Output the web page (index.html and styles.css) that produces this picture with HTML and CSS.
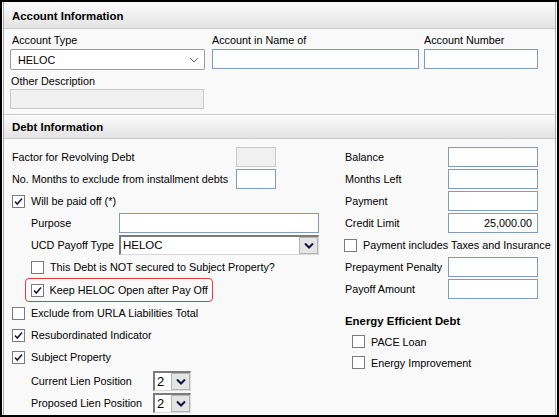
FILE: index.html
```html
<html>
  <head>
    <link rel="stylesheet" href="styles.css">
  </head>
  <body>
    <div class="frame">
      <div class="panel">
        <div class="bar">Account Information</div>
        <div class="account">
          <label class="cap first">Account Type</label>
          <label class="cap">Account in Name of</label>
          <label class="cap">Account Number</label>

          <div class="select w-type">
            <span>HELOC</span>
            <svg class="chev" viewBox="0 0 10 6"><polyline points="1,1 5,5 9,1"/></svg>
          </div>
          <div class="text w-name"></div>
          <div class="text w-number"></div>

          <label class="cap wide">Other Description</label>
          <div class="text off w-other wide"></div>
        </div>

        <div class="bar boxed">Debt Information</div>
        <div class="debt">
          <div class="col">
            <div class="row">
              <span class="lbl w-long">Factor for Revolving Debt</span>
              <div class="text off small"></div>
            </div>
            <div class="row">
              <span class="lbl w-long">No. Months to exclude from installment debts</span>
              <div class="text small"></div>
            </div>
            <div class="row">
              <span class="cb on"><svg viewBox="0 0 11 11"><polyline points="2,5.5 4.3,8 9,2.5"/></svg></span>
              <span>Will be paid off (*)</span>
            </div>
            <div class="row indent">
              <span class="lbl w-mid">Purpose</span>
              <div class="text w-purpose"></div>
            </div>
            <div class="row indent">
              <span class="lbl w-mid">UCD Payoff Type</span>
              <div class="oldsel w-purpose">
                <span class="val">HELOC</span>
                <span class="btn"><svg viewBox="0 0 10 7"><polyline points="1,1.5 5,5.5 9,1.5"/></svg></span>
              </div>
            </div>
            <div class="row indent">
              <span class="cb"></span>
              <span>This Debt is NOT secured to Subject Property?</span>
            </div>
            <div class="row marked">
              <span class="cb on"><svg viewBox="0 0 11 11"><polyline points="2,5.5 4.3,8 9,2.5"/></svg></span>
              <span>Keep HELOC Open after Pay Off</span>
            </div>
            <div class="row">
              <span class="cb"></span>
              <span>Exclude from URLA Liabilities Total</span>
            </div>
            <div class="row">
              <span class="cb on"><svg viewBox="0 0 11 11"><polyline points="2,5.5 4.3,8 9,2.5"/></svg></span>
              <span>Resubordinated Indicator</span>
            </div>
            <div class="row">
              <span class="cb on"><svg viewBox="0 0 11 11"><polyline points="2,5.5 4.3,8 9,2.5"/></svg></span>
              <span>Subject Property</span>
            </div>
            <div class="row indent lien">
              <span class="lbl w-lien">Current Lien Position</span>
              <div class="oldsel tiny">
                <span class="val">2</span>
                <span class="btn"><svg viewBox="0 0 10 7"><polyline points="1,1.5 5,5.5 9,1.5"/></svg></span>
              </div>
            </div>
            <div class="row indent">
              <span class="lbl w-lien">Proposed Lien Position</span>
              <div class="oldsel tiny">
                <span class="val">2</span>
                <span class="btn"><svg viewBox="0 0 10 7"><polyline points="1,1.5 5,5.5 9,1.5"/></svg></span>
              </div>
            </div>
          </div>

          <div class="col">
            <div class="row">
              <span class="lbl w-right">Balance</span>
              <div class="text w-amount"></div>
            </div>
            <div class="row">
              <span class="lbl w-right">Months Left</span>
              <div class="text w-amount"></div>
            </div>
            <div class="row">
              <span class="lbl w-right">Payment</span>
              <div class="text w-amount"></div>
            </div>
            <div class="row">
              <span class="lbl w-right">Credit Limit</span>
              <div class="text w-amount num">25,000.00</div>
            </div>
            <div class="row">
              <span class="cb"></span>
              <span>Payment includes Taxes and Insurance</span>
            </div>
            <div class="row">
              <span class="lbl w-right">Prepayment Penalty</span>
              <div class="text w-amount"></div>
            </div>
            <div class="row">
              <span class="lbl w-right">Payoff Amount</span>
              <div class="text w-amount"></div>
            </div>

            <h3>Energy Efficient Debt</h3>
            <div class="row short">
              <span class="cb"></span>
              <span>PACE Loan</span>
            </div>
            <div class="row short">
              <span class="cb"></span>
              <span>Energy Improvement</span>
            </div>
          </div>
        </div>
      </div>
    </div>
  </body>
</html>
```

FILE: styles.css
```css
:root {
  --frame-color: #000;
  --panel-color: #f9f9f9;
  --line-color: #c9c9c9;
  --side-color: #a9a9a9;
  --text-color: #000;
  --input-border: #7f9db9;
  --off-border: #c8c8c8;
  --off-fill: #f0f0f0;
  --mark-color: #e23c3c;
}

* {
  box-sizing: border-box;
}

html, body {
  margin: 0;
  padding: 0;
}

body {
  font-family: "Liberation Sans", Arial, sans-serif;
  font-size: 10.8px;
  color: var(--text-color);
  background: #fff;
}

.frame {
  width: 559px;
  height: 417px;
  border: 2px solid var(--frame-color);
  overflow: hidden;
  background: #fff;
}

.panel {
  height: 100%;
  margin: 0 1px;
  border-left: 1px solid var(--side-color);
  border-right: 1px solid var(--side-color);
  background: var(--panel-color);
}

/* section title bars */
.bar {
  height: 27px;
  padding-left: 8px;
  display: flex;
  align-items: center;
  padding-top: 1px;
  font-weight: bold;
  font-size: 11.4px;
  background: linear-gradient(#fbfbfb, #e3e3e3);
  border-bottom: 1px solid var(--line-color);
}

.bar.boxed {
  height: 25px;
  border-top: 1px solid var(--line-color);
}

/* account block */
.account {
  display: grid;
  grid-template-columns: 202px 212px 114px;
  padding: 4px 0 5px 6px;
}

.cap {
  height: 14px;
  line-height: 14px;
  margin-bottom: 2px;
}

.cap.first {
  padding-left: 2px;
}

.wide {
  grid-column: 1 / -1;
}

.account .cap.wide {
  margin: 4px 0 1px 1px;
}

.text {
  height: 20px;
  border: 1px solid var(--input-border);
  background: #fff;
}

.text.off {
  background: var(--off-fill);
  border-color: var(--off-border);
}

.text.num {
  text-align: right;
  line-height: 18px;
  padding-right: 5px;
}

.w-type { width: 195px; }
.w-name { width: 207px; }
.w-number { width: 114px; }
.w-other { width: 194px; }

.select {
  height: 21px;
  border: 1px solid #9a9a9a;
  border-radius: 2px;
  background: #fff;
  display: flex;
  align-items: center;
  justify-content: space-between;
  padding: 0 5px 0 7px;
}

.chev {
  width: 10px;
  height: 6px;
  fill: none;
  stroke: #6a6a6a;
  stroke-width: 1;
}

/* debt block */
.debt {
  display: grid;
  grid-template-columns: 332px 1fr;
  padding: 7px 0 0 8px;
}

.col {
  display: flex;
  flex-direction: column;
}

.row {
  height: 22px;
  display: flex;
  align-items: center;
  white-space: nowrap;
}

.row.indent {
  padding-left: 19px;
}

.row.lien {
  margin-top: 2px;
}

.row.short {
  height: 21px;
  padding-left: 8px;
}

.row.marked {
  height: 24px;
  width: 188px;
  margin-left: 13px;
  padding-left: 4.5px;
  border: 1.5px solid var(--mark-color);
  border-radius: 4px;
}

.lbl {
  flex: none;
}

.w-long { width: 224px; }
.w-mid { width: 88px; }
.w-lien { width: 122px; }
.w-right { width: 104px; padding-left: 1px; }

.small { width: 40px; }
.w-purpose { width: 200px; }
.w-amount { width: 90px; }

.cb {
  flex: none;
  width: 13px;
  height: 13px;
  margin-right: 6px;
  border: 1px solid #7a7a7a;
  background: #fff;
  display: flex;
  align-items: center;
  justify-content: center;
}

.cb svg {
  width: 11px;
  height: 11px;
  fill: none;
  stroke: #14143a;
  stroke-width: 1.5;
}

.oldsel {
  height: 20px;
  display: flex;
  background: #fff;
  border-top: 2px solid #7b7b7b;
  border-left: 2px solid #7b7b7b;
  border-right: 1px solid #d8d8d8;
  border-bottom: 1px solid #d8d8d8;
}

.oldsel .val {
  flex: 1;
  padding-left: 2px;
  line-height: 17px;
  font-size: 11.5px;
}

.oldsel .btn {
  width: 19px;
  background: #e4e4e4;
  border: 1px solid #b4b4b4;
  display: flex;
  align-items: center;
  justify-content: center;
}

.oldsel .btn svg {
  width: 10px;
  height: 7px;
  fill: none;
  stroke: #101040;
  stroke-width: 2;
}

.tiny {
  width: 38px;
}

.tiny .val {
  font-size: 13px;
}

h3 {
  margin: 11px 0 0 1px;
  height: 20px;
  line-height: 20px;
  font-size: 11.4px;
}
```
